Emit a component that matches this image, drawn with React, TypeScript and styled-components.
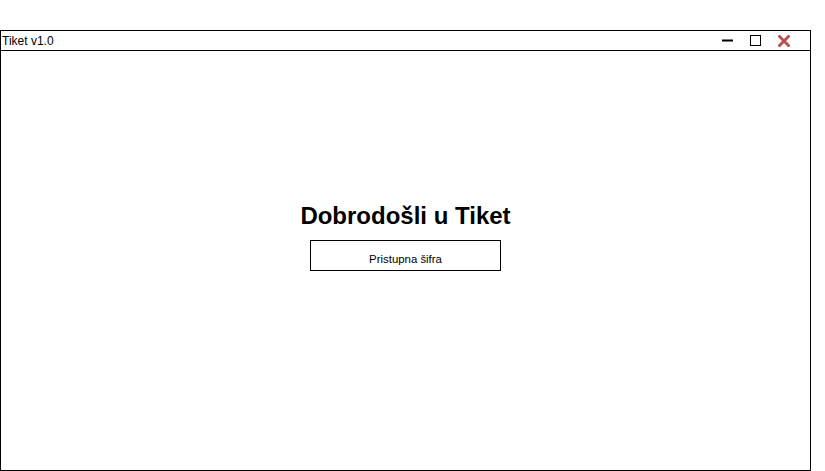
import React from "react";
import styled, { createGlobalStyle } from "styled-components";

const Global = createGlobalStyle`
  html, body { margin: 0; padding: 0; background: #ffffff; }
  body { font-family: Helvetica, "Liberation Sans", Arial, sans-serif; }
`;

const Page = styled.div`
  padding-top: 30px;
  width: 825px;
  height: 441px;
`;

const Window = styled.div`
  box-sizing: border-box;
  width: 811px;
  height: 441px;
  border: 1px solid #000;
  display: flex;
  flex-direction: column;
`;

const TitleBar = styled.div`
  box-sizing: border-box;
  height: 20px;
  border-bottom: 1px solid #000;
  display: flex;
  align-items: center;
  justify-content: space-between;
  padding: 0 20px 0 1px;
`;

const Title = styled.span`
  font-size: 12px;
  color: #000;
  line-height: 14px;
`;

const Controls = styled.div`
  display: flex;
  align-items: center;
  gap: 17px;
`;

const Ctrl = styled.svg`
  display: block;
`;

const Body = styled.div`
  flex: 1;
  display: flex;
  flex-direction: column;
  align-items: center;
  padding-top: 151px;
`;

const Heading = styled.h1`
  margin: 0;
  font-size: 24px;
  font-weight: bold;
  line-height: 28px;
  color: #000;
`;

const Field = styled.div`
  box-sizing: border-box;
  margin-top: 10px;
  width: 191px;
  height: 31px;
  border: 1px solid #000;
  display: flex;
  align-items: center;
  justify-content: center;
  padding-top: 7px;
  font-size: 11.4px;
  color: #000;
`;

export default function App() {
  return (
    <>
      <Global />
      <Page>
        <Window>
          <TitleBar>
            <Title>Tiket v1.0</Title>
            <Controls>
              <Ctrl width="11" height="11" viewBox="0 0 11 11">
                <rect x="0" y="4.5" width="11" height="2" fill="#000" />
              </Ctrl>
              <Ctrl width="11" height="11" viewBox="0 0 11 11">
                <rect x="0.5" y="0.5" width="10" height="10" fill="none" stroke="#000" strokeWidth="1" />
              </Ctrl>
              <Ctrl width="12" height="12" viewBox="0 0 12 12">
                <path d="M1.5 1.5 L10.5 10.5 M10.5 1.5 L1.5 10.5" stroke="#b85450" strokeWidth="3" strokeLinecap="square" />
              </Ctrl>
            </Controls>
          </TitleBar>
          <Body>
            <Heading>Dobrodošli u Tiket</Heading>
            <Field>Pristupna šifra</Field>
          </Body>
        </Window>
      </Page>
    </>
  );
}
